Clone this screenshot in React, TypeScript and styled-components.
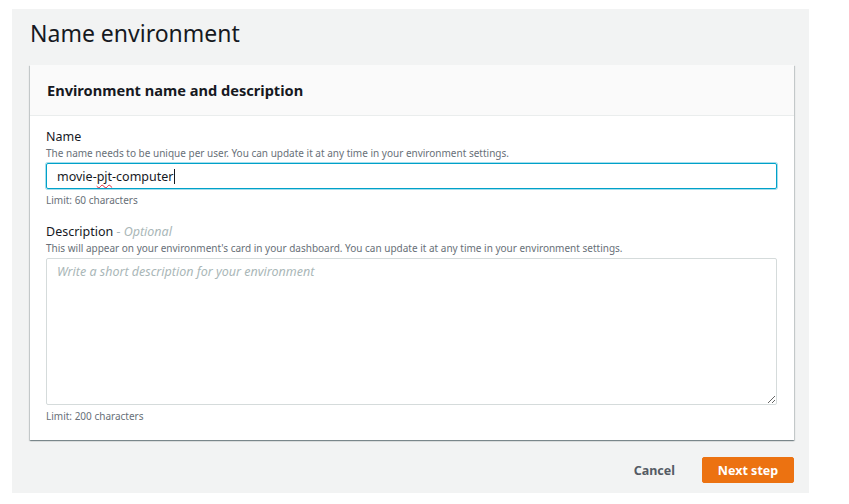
import React from "react";
import styled, { createGlobalStyle } from "styled-components";

const Global = createGlobalStyle`
  html, body { margin: 0; padding: 0; background: #ffffff; }
  body { font-family: "Noto Sans", "Open Sans", Arial, sans-serif; }
  * { box-sizing: border-box; }
`;

const Page = styled.div`
  margin: 9px 0 0 12px;
  width: 797px;
  height: 484px;
  background: #f2f3f3;
  padding: 0 15px 0 18px;
  display: flex;
  flex-direction: column;
`;

const Title = styled.h1`
  margin: 0;
  height: 56px;
  padding-top: 9px;
  font-size: 23px;
  line-height: 30px;
  font-weight: 400;
  color: #16191f;
`;

const Card = styled.section`
  background: #ffffff;
  box-shadow: 0 1px 1px 0 rgba(0, 28, 36, 0.3), 1px 1px 1px 0 rgba(0, 28, 36, 0.15),
    -1px 1px 1px 0 rgba(0, 28, 36, 0.15);
`;

const CardHeader = styled.header`
  height: 51px;
  background: #fafafa;
  border-bottom: 1px solid #eaeded;
  padding-left: 17px;
  display: flex;
  align-items: center;
`;

const CardTitle = styled.h2`
  margin: 0;
  font-size: 14.6px;
  font-weight: 700;
  color: #16191f;
`;

const CardBody = styled.div`
  padding: 13px 17px 17px 16px;
  display: flex;
  flex-direction: column;
`;

const Label = styled.div<{ $gap?: number }>`
  margin-top: ${(p) => p.$gap ?? 0}px;
  font-size: 12.5px;
  line-height: 16px;
  color: #16191f;
`;

const Optional = styled.span`
  font-style: italic;
  color: #aab7b8;
`;

const Hint = styled.div`
  font-size: 10px;
  line-height: 14px;
  color: #687078;
  margin-top: 1px;
`;

const InputBox = styled.div`
  margin-top: 3px;
  height: 26px;
  border: 1px solid #00a1c9;
  box-shadow: 0 0 0 1px rgba(0, 161, 201, 0.35);
  border-radius: 2px;
  padding: 0 10px;
  display: flex;
  align-items: center;
  font-size: 12.5px;
  color: #16191f;
`;

const Misspelled = styled.span`
  text-decoration-line: underline;
  text-decoration-style: wavy;
  text-decoration-color: #e0263a;
  text-decoration-thickness: 1px;
  text-underline-offset: 3px;
`;

const Caret = styled.span`
  display: inline-block;
  width: 1px;
  height: 15px;
  background: #16191f;
`;

const TextArea = styled.textarea`
  margin-top: 3px;
  height: 147px;
  width: 100%;
  border: 1px solid #d5dbdb;
  border-radius: 2px;
  padding: 4px 10px;
  font-family: inherit;
  font-size: 12.5px;
  color: #16191f;
  resize: vertical;
  outline: none;
  &::placeholder {
    color: #aab7b8;
    font-style: italic;
  }
`;

const Limit = styled.div`
  margin-top: 4px;
  font-size: 10px;
  line-height: 14px;
  color: #687078;
`;

const Footer = styled.div`
  margin-top: 17px;
  display: flex;
  justify-content: flex-end;
  align-items: center;
  gap: 27px;
`;

const LinkButton = styled.button`
  background: none;
  border: none;
  padding: 0;
  font-family: inherit;
  font-size: 12.5px;
  font-weight: 700;
  color: #545b64;
`;

const PrimaryButton = styled.button`
  width: 92px;
  height: 26px;
  background: #ec7211;
  border: 1px solid #ec7211;
  border-radius: 2px;
  color: #ffffff;
  font-family: inherit;
  font-size: 12.5px;
  font-weight: 700;
  padding: 0;
`;

export default function App() {
  return (
    <>
      <Global />
      <Page>
        <Title>Name environment</Title>
        <Card>
          <CardHeader>
            <CardTitle>Environment name and description</CardTitle>
          </CardHeader>
          <CardBody>
            <Label>Name</Label>
            <Hint>
              The name needs to be unique per user. You can update it at any time in your environment
              settings.
            </Hint>
            <InputBox>
              movie-<Misspelled>pjt</Misspelled>-computer
              <Caret />
            </InputBox>
            <Limit>Limit: 60 characters</Limit>
            <Label $gap={17}>
              Description <Optional>- Optional</Optional>
            </Label>
            <Hint>
              This will appear on your environment's card in your dashboard. You can update it at any
              time in your environment settings.
            </Hint>
            <TextArea placeholder="Write a short description for your environment" />
            <Limit>Limit: 200 characters</Limit>
          </CardBody>
        </Card>
        <Footer>
          <LinkButton>Cancel</LinkButton>
          <PrimaryButton>Next step</PrimaryButton>
        </Footer>
      </Page>
    </>
  );
}
